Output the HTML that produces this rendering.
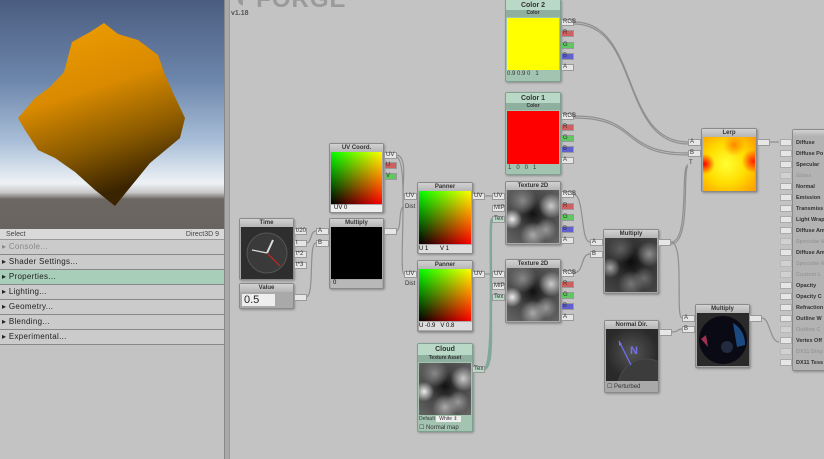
<!DOCTYPE html>
<html><head><meta charset="utf-8"><style>
*{margin:0;padding:0;box-sizing:border-box}
body{width:824px;height:459px;overflow:hidden;background:#c3c3c3;font-family:"Liberation Sans",sans-serif;position:relative}
.a{position:absolute}
.node{position:absolute;background:#a9a9a9;border:1px solid #8a8a8a;border-radius:2px;box-shadow:1px 1px 2px rgba(0,0,0,.3)}
.tt{position:absolute;left:0;right:0;top:0;height:8px;background:linear-gradient(#d2d2d2,#b5b5b5);font-size:6px;font-weight:bold;text-align:center;line-height:8px;color:#333}
.p{position:absolute;left:1px;right:1px}
.port{position:absolute;height:7px;width:13px;background:#e6e6e6;border:1px solid #999;font-size:6px;line-height:5px;padding-left:1px;color:#333}
.uv{background:linear-gradient(to right,#000,#f00),linear-gradient(to top,#000,#0f0);background-blend-mode:screen}
.noise{background:radial-gradient(circle at 10% 55%,#eee 0,transparent 18%),radial-gradient(circle at 85% 30%,#ccc 0,transparent 22%),radial-gradient(circle at 50% 85%,#aaa 0,transparent 25%),radial-gradient(circle at 30% 20%,#888 0,transparent 25%),radial-gradient(circle at 75% 75%,#999 0,transparent 20%),radial-gradient(circle at 50% 45%,#111 0,#444 40%,#666 100%)}
.row{position:absolute;left:0;width:224px;height:15px;border-bottom:1px solid #888;background:#cbcbcb;font-size:8px;line-height:14px;padding-left:2px;color:#222;letter-spacing:.3px}
.ml{position:absolute;left:3px;font-size:5.5px;font-weight:bold;color:#333}
.mi{position:absolute;left:780px;width:12px;height:7px;background:#e6e6e6;border:1px solid #aaa}
</style></head><body>
<!-- viewport -->
<div class="a" style="left:0;top:0;width:224px;height:229px;background:linear-gradient(#4a5d80 0%,#6d86ab 35%,#a9bfd8 62%,#eef2f5 80%,#c8c8c8 84%,#6d6762 87%,#6a6460 100%)"></div>
<svg class="a" style="left:0;top:0" width="224" height="229">
<defs><linearGradient id="g" x1="0" y1="0" x2="0.3" y2="1"><stop offset="0" stop-color="#f0a000"/><stop offset=".45" stop-color="#d98a00"/><stop offset=".75" stop-color="#8a5a00"/><stop offset="1" stop-color="#3a2400"/></linearGradient></defs>
<path d="M104,23 L118,34 L138,40 L158,55 L165,75 L174,95 L185,118 L180,138 L168,148 L150,163 L128,190 L115,206 L95,190 L75,172 L55,158 L38,150 L25,130 L18,118 L35,98 L50,87 L64,72 L72,42 L90,32 Z" fill="url(#g)"/>
</svg>
<div class="a" style="left:224px;top:0;width:6px;height:459px;background:#a8a8a8;border-left:1px solid #888;border-right:1px solid #999"></div>
<!-- panel -->
<div class="a" style="left:0;top:229px;width:224px;height:11px;background:#d9d9d9;border-bottom:1px solid #999;font-size:7px;color:#444;line-height:11px"><span style="margin-left:6px">Select</span><span style="position:absolute;right:5px">Direct3D 9</span></div>
<div class="row" style="top:240px;color:#888">▸ Console...</div>
<div class="row" style="top:255px">▸ Shader Settings...</div>
<div class="row" style="top:270px;background:#a8cdb9">▸ Properties...</div>
<div class="row" style="top:285px">▸ Lighting...</div>
<div class="row" style="top:300px">▸ Geometry...</div>
<div class="row" style="top:315px">▸ Blending...</div>
<div class="row" style="top:330px">▸ Experimental...</div>
<!-- logo -->
<div class="a" style="left:233px;top:-14px;font-size:24px;font-weight:bold;color:#9a9a9a;letter-spacing:1px">◖ FORGE</div>
<div class="a" style="left:231px;top:10px;font-size:7px;font-weight:bold;color:#555">v1.18</div>
<!-- wires -->
<svg class="a" style="left:0;top:0" width="824" height="459" fill="none" stroke="#8f8f8f" stroke-width="1.2">
<path d="M574,22 C640,22 620,142 688,142"/><path d="M574,24 C640,24 620,144 688,144"/>
<path d="M574,116 C640,116 620,153 688,153"/><path d="M574,118 C640,118 620,155 688,155"/>
<path d="M671,242 C690,242 680,165 688,165"/><path d="M671,244 C692,244 682,167 688,167"/>
<path d="M396,155 C410,155 400,196 404,196"/><path d="M396,157 C410,157 398,274 404,274"/>
<path d="M306,243 C312,243 310,231 316,231"/><path d="M306,297 C315,297 308,243 316,243"/>
<path d="M396,231 C402,231 398,207 404,207"/>
<path d="M484,196 L492,196"/><path d="M484,274 L492,274"/>
<path d="M573,194 C585,194 580,242 590,242"/><path d="M573,273 C585,273 580,254 590,254"/>
<path d="M671,332 C680,332 676,329 682,329"/>
<path d="M671,242 C685,242 675,318 682,318"/>
<path d="M762,318 C770,318 770,342 779,342"/><path d="M769,142 L779,142"/>
<g stroke="#7fa898" stroke-width="2.5"><path d="M484,369 C496,369 488,219 492,219"/><path d="M484,369 C496,369 488,297 492,297"/></g>
</svg>
<!-- Color 2 -->
<div class="node" style="left:505px;top:-1px;width:56px;height:83px;background:#a4c4b2;border-color:#7fa090">
<div class="tt" style="height:10px;line-height:11px;font-size:7px;background:#b9d8c6">Color 2</div>
<div class="tt" style="top:10px;height:7px;line-height:7px;font-size:5px;background:#8fb09f">Color</div>
<div class="p" style="top:18px;height:52px;background:#ff0"></div>
<div class="a" style="left:1px;top:71px;font-size:6px;color:#333">0.9 0.9 0 &nbsp; 1</div></div>
<!-- Color 1 -->
<div class="node" style="left:505px;top:92px;width:56px;height:83px;background:#a4c4b2;border-color:#7fa090">
<div class="tt" style="height:10px;line-height:11px;font-size:7px;background:#b9d8c6">Color 1</div>
<div class="tt" style="top:10px;height:7px;line-height:7px;font-size:5px;background:#8fb09f">Color</div>
<div class="p" style="top:18px;height:53px;background:#f00"></div>
<div class="a" style="left:2px;top:72px;font-size:6px;color:#333">1 &nbsp; 0 &nbsp; 0 &nbsp; 1</div></div>
<div class="port" style="left:561px;top:19px">RGB</div><div class="port" style="left:561px;top:30px;background:#d06060">R</div><div class="port" style="left:561px;top:42px;background:#60c860">G</div><div class="port" style="left:561px;top:53px;background:#6060d0">B</div><div class="port" style="left:561px;top:64px">A</div>
<div class="port" style="left:561px;top:113px">RGB</div><div class="port" style="left:561px;top:124px;background:#d06060">R</div><div class="port" style="left:561px;top:135px;background:#60c860">G</div><div class="port" style="left:561px;top:146px;background:#6060d0">B</div><div class="port" style="left:561px;top:157px">A</div>
<!-- UV coord -->
<div class="node" style="left:329px;top:143px;width:55px;height:70px"><div class="tt">UV Coord.</div><div class="p uv" style="top:8px;height:52px"></div><div class="p" style="top:61px;height:7px;background:#eee;font-size:6px;line-height:7px;padding-left:3px">UV 0</div></div>
<div class="port" style="left:384px;top:152px">UV</div><div class="port" style="left:384px;top:162px;background:#d06060">U</div><div class="port" style="left:384px;top:173px;background:#60c860">V</div>
<!-- Time -->
<div class="node" style="left:239px;top:218px;width:55px;height:62px"><div class="tt">Time</div>
<svg class="p" style="top:8px" width="52" height="52"><rect width="52" height="52" fill="#2e2e2e"/><circle cx="26" cy="26" r="20" fill="#3a3a3a" stroke="#555"/><line x1="26" y1="26" x2="32" y2="13" stroke="#ddd" stroke-width="2"/><line x1="26" y1="26" x2="11" y2="23" stroke="#ddd" stroke-width="1.2"/><line x1="26" y1="26" x2="39" y2="39" stroke="#d22" stroke-width="1"/></svg></div>
<div class="port" style="left:294px;top:228px">t/20</div><div class="port" style="left:294px;top:240px">t</div><div class="port" style="left:294px;top:251px">t*2</div><div class="port" style="left:294px;top:262px">t*3</div>
<!-- Value -->
<div class="node" style="left:239px;top:283px;width:55px;height:26px"><div class="tt">Value</div><div class="a" style="left:2px;top:10px;width:33px;height:12px;background:#eee;font-size:11px;line-height:12px;padding-left:2px;color:#222">0.5</div></div>
<div class="port" style="left:294px;top:294px"></div>
<!-- Multiply 1 -->
<div class="node" style="left:329px;top:218px;width:55px;height:71px"><div class="tt">Multiply</div><div class="p" style="top:8px;height:52px;background:#000"></div><div class="p" style="top:61px;height:8px;background:#b8b8b8;font-size:6px;padding-left:2px">0</div></div>
<div class="port" style="left:316px;top:228px">A</div><div class="port" style="left:316px;top:240px">B</div><div class="port" style="left:384px;top:228px"></div>
<!-- Panners -->
<div class="node" style="left:417px;top:182px;width:56px;height:72px"><div class="tt">Panner</div><div class="p uv" style="top:8px;height:53px"></div><div class="a" style="left:1px;top:62px;font-size:6px;line-height:8px;width:53px;background:#ddd">U 1 &nbsp; &nbsp; &nbsp; V 1</div></div>
<div class="node" style="left:417px;top:260px;width:56px;height:72px"><div class="tt">Panner</div><div class="p uv" style="top:8px;height:52px"></div><div class="a" style="left:1px;top:61px;font-size:6px;line-height:8px;width:53px;background:#ddd">U -0.9 &nbsp; V 0.8</div></div>
<div class="port" style="left:404px;top:193px">UV</div><div class="port" style="left:404px;top:205px;background:none;border:none">Dist</div><div class="port" style="left:472px;top:193px">UV</div>
<div class="port" style="left:404px;top:271px">UV</div><div class="port" style="left:404px;top:282px;background:none;border:none">Dist</div><div class="port" style="left:472px;top:271px">UV</div>
<!-- Cloud -->
<div class="node" style="left:417px;top:343px;width:56px;height:89px;background:#a4c4b2;border-color:#7fa090">
<div class="tt" style="height:11px;line-height:11px;font-size:7px;background:#b9d8c6">Cloud</div>
<div class="tt" style="top:11px;height:7px;line-height:7px;font-size:5px;background:#8fb09f">Texture Asset</div>
<div class="p noise" style="top:19px;height:52px"></div>
<div class="a" style="left:1px;top:72px;font-size:5px;color:#333">Default <span style="background:#eee;padding:0 3px">White ⇕</span></div>
<div class="a" style="left:1px;top:80px;font-size:6px;color:#333">☐ Normal map</div></div>
<div class="port" style="left:472px;top:366px;background:#b9d8c6">Tex</div>
<!-- Texture 2D -->
<div class="node" style="left:505px;top:181px;width:56px;height:64px"><div class="tt">Texture 2D</div><div class="p noise" style="top:8px;height:53px"></div></div>
<div class="node" style="left:505px;top:259px;width:56px;height:64px"><div class="tt">Texture 2D</div><div class="p noise" style="top:8px;height:53px"></div></div>
<div class="port" style="left:492px;top:193px">UV</div><div class="port" style="left:492px;top:205px">MIP</div><div class="port" style="left:492px;top:216px;background:#b9d8c6">Tex</div>
<div class="port" style="left:492px;top:271px">UV</div><div class="port" style="left:492px;top:283px">MIP</div><div class="port" style="left:492px;top:294px;background:#b9d8c6">Tex</div>
<div class="port" style="left:561px;top:191px">RGB</div><div class="port" style="left:561px;top:203px;background:#d06060">R</div><div class="port" style="left:561px;top:214px;background:#60c860">G</div><div class="port" style="left:561px;top:226px;background:#6060d0">B</div><div class="port" style="left:561px;top:237px">A</div>
<div class="port" style="left:561px;top:270px">RGB</div><div class="port" style="left:561px;top:281px;background:#d06060">R</div><div class="port" style="left:561px;top:292px;background:#60c860">G</div><div class="port" style="left:561px;top:303px;background:#6060d0">B</div><div class="port" style="left:561px;top:314px">A</div>
<!-- Multiply mid -->
<div class="node" style="left:603px;top:229px;width:56px;height:65px"><div class="tt">Multiply</div><div class="p noise" style="top:8px;height:54px;filter:brightness(.7)"></div></div>
<div class="port" style="left:590px;top:239px">A</div><div class="port" style="left:590px;top:251px">B</div><div class="port" style="left:658px;top:239px"></div>
<!-- Lerp -->
<div class="node" style="left:701px;top:128px;width:56px;height:64px"><div class="tt">Lerp</div><div class="p" style="top:8px;height:54px;background:radial-gradient(circle at 3% 50%,#f00 0,transparent 18%),radial-gradient(circle at 97% 45%,#f20 0,transparent 20%),radial-gradient(circle at 60% 15%,#f80 0,transparent 20%),radial-gradient(circle at 45% 50%,#ff3 0,#fd0 50%,#f90 100%)"></div></div>
<div class="port" style="left:688px;top:139px">A</div><div class="port" style="left:688px;top:150px">B</div><div class="port" style="left:688px;top:161px;background:none;border:none">T</div><div class="port" style="left:757px;top:139px"></div>
<!-- Normal dir -->
<div class="node" style="left:604px;top:320px;width:55px;height:73px"><div class="tt">Normal Dir.</div>
<svg class="p" style="top:8px" width="52" height="52"><defs><radialGradient id="r" cx=".5" cy=".45"><stop offset="0" stop-color="#555"/><stop offset="1" stop-color="#2a2a2a"/></radialGradient></defs><rect width="52" height="52" fill="url(#r)"/><circle cx="40" cy="58" r="28" fill="#3c3c3c" stroke="#4a4a4a"/><line x1="25" y1="36" x2="13" y2="12" stroke="#7070f0" stroke-width="1.3"/><path d="M13,12 l0,5 l3,-2z" fill="#7070f0"/><text x="24" y="25" font-size="11" font-weight="bold" fill="#7070f0" font-family="Liberation Sans">N</text></svg>
<div class="a" style="left:2px;top:62px;font-size:6px;color:#333">☐ Perturbed</div></div>
<div class="port" style="left:659px;top:329px"></div>
<!-- Multiply bottom -->
<div class="node" style="left:695px;top:304px;width:55px;height:64px"><div class="tt">Multiply</div>
<svg class="p" style="top:8px" width="52" height="53"><rect width="52" height="53" fill="#2a2a2a"/><circle cx="26" cy="27" r="24" fill="#0a0a14"/><path d="M36,10 a24,24 0 0 1 12,22 l-8,2z" fill="#1a4a80"/><path d="M4,26 l5,-4 l2,12z" fill="#a03050"/><circle cx="30" cy="34" r="6" fill="#222a40"/></svg></div>
<div class="port" style="left:682px;top:315px">A</div><div class="port" style="left:682px;top:326px">B</div><div class="port" style="left:749px;top:315px"></div>
<!-- main -->
<div class="node" style="left:792px;top:129px;width:40px;height:242px;background:#b3b3b3"><div class="tt" style="height:6px"></div>
<div class="ml" style="top:10px">Diffuse</div><div class="ml" style="top:21px">Diffuse Po</div><div class="ml" style="top:32px">Specular</div><div class="ml" style="top:43px;color:#999">Gloss</div><div class="ml" style="top:54px">Normal</div><div class="ml" style="top:65px">Emission</div><div class="ml" style="top:76px">Transmiss</div><div class="ml" style="top:87px">Light Wrap</div><div class="ml" style="top:98px">Diffuse Am</div><div class="ml" style="top:109px;color:#999">Specular A</div><div class="ml" style="top:120px">Diffuse Am</div><div class="ml" style="top:131px;color:#999">Specular A</div><div class="ml" style="top:142px;color:#999">Custom L</div><div class="ml" style="top:153px">Opacity</div><div class="ml" style="top:164px">Opacity C</div><div class="ml" style="top:175px">Refraction</div><div class="ml" style="top:186px">Outline W</div><div class="ml" style="top:197px;color:#999">Outline C</div><div class="ml" style="top:208px">Vertex Off</div><div class="ml" style="top:219px;color:#999">DX11 Disp</div><div class="ml" style="top:230px">DX11 Tess</div></div>
<div class="mi" style="top:139px"></div><div class="mi" style="top:150px"></div><div class="mi" style="top:161px"></div><div class="mi" style="top:172px;opacity:.4"></div><div class="mi" style="top:183px"></div><div class="mi" style="top:194px"></div><div class="mi" style="top:205px"></div><div class="mi" style="top:216px"></div><div class="mi" style="top:227px"></div><div class="mi" style="top:238px;opacity:.4"></div><div class="mi" style="top:249px"></div><div class="mi" style="top:260px;opacity:.4"></div><div class="mi" style="top:271px;opacity:.4"></div><div class="mi" style="top:282px"></div><div class="mi" style="top:293px"></div><div class="mi" style="top:304px"></div><div class="mi" style="top:315px"></div><div class="mi" style="top:326px;opacity:.4"></div><div class="mi" style="top:337px"></div><div class="mi" style="top:348px;opacity:.4"></div><div class="mi" style="top:359px"></div>
</body></html>
